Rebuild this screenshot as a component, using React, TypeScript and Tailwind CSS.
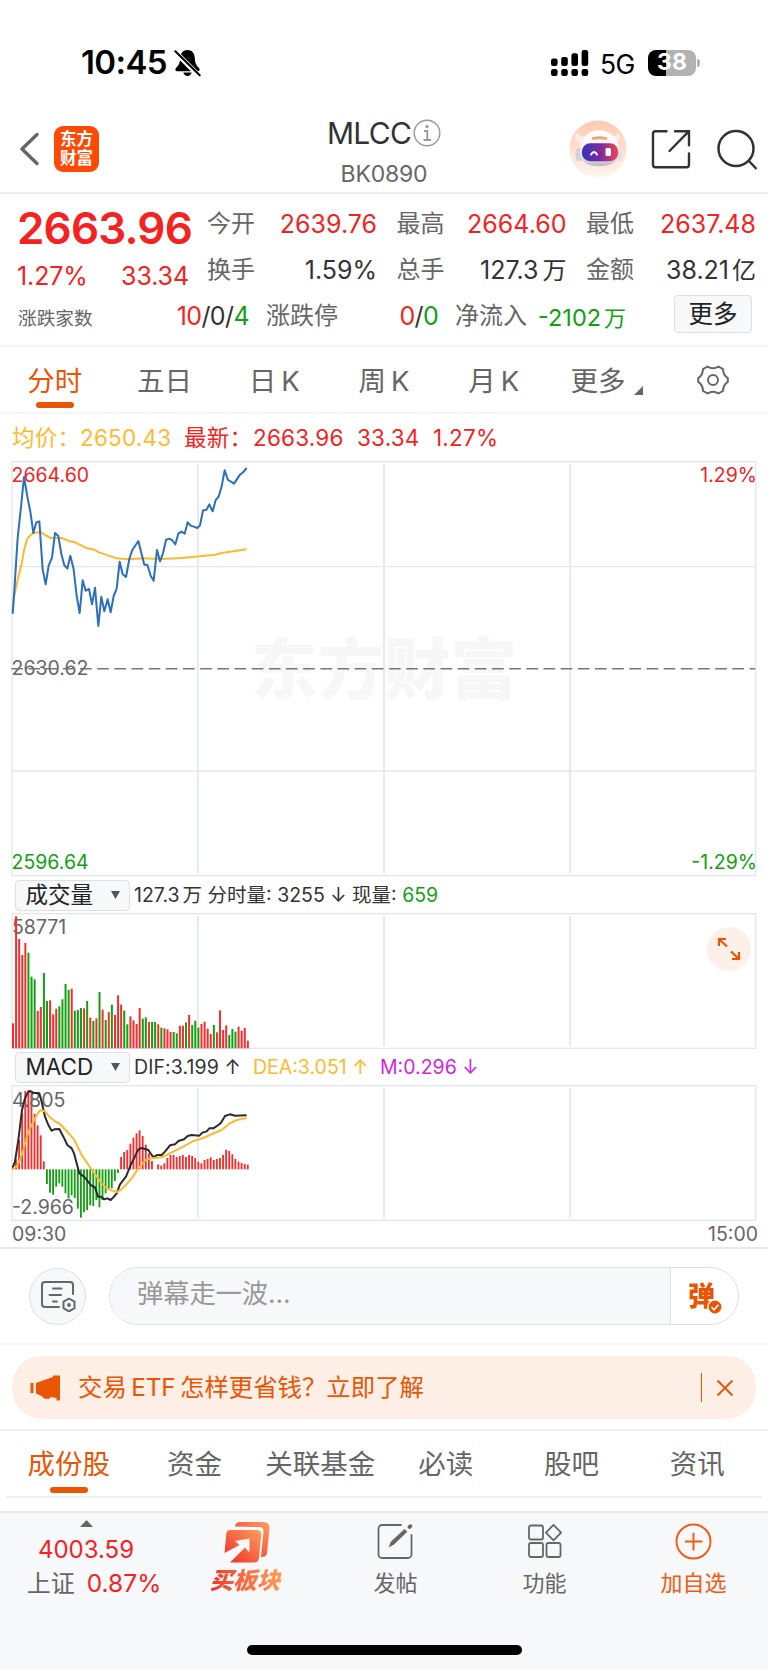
import type { ReactNode } from 'react';

type Bar = [string, number];

// 分时量: 每分钟一根 (颜色, 顶部 y)
const VOLUME: Bar[] = [
  ['r', 458], ['r', 137], ['r', 205], ['r', 253], ['r', 217], ['g', 246], ['g', 318], ['g', 326], ['r', 421], ['r', 409],
  ['g', 307], ['g', 391], ['r', 389], ['r', 431], ['r', 414], ['g', 407], ['g', 386], ['g', 340], ['g', 358], ['r', 354],
  ['g', 420], ['g', 418], ['g', 412], ['r', 413], ['g', 391], ['r', 441], ['g', 451], ['r', 443], ['g', 364], ['r', 417],
  ['g', 448], ['r', 424], ['g', 402], ['r', 433], ['r', 374], ['r', 402], ['g', 420], ['g', 461], ['r', 437], ['r', 449],
  ['r', 460], ['r', 412], ['g', 444], ['g', 440], ['r', 454], ['g', 454], ['g', 454], ['r', 461], ['g', 471], ['r', 473],
  ['r', 476], ['r', 484], ['g', 484], ['g', 488], ['r', 465], ['r', 465], ['g', 455], ['r', 433], ['g', 463], ['g', 450],
  ['g', 471], ['r', 460], ['r', 453], ['r', 474], ['r', 490], ['g', 463], ['r', 485], ['r', 419], ['r', 478], ['r', 464],
  ['g', 493], ['g', 475], ['g', 483], ['r', 468], ['r', 480], ['r', 472], ['r', 510],
];

const MACD = [
  350, 328, 270, 190, 123, 120, 128, 192, 226, 256, 334, 402, 428, 434, 410, 400, 410, 430, 445, 436,
  444, 476, 503, 487, 480, 466, 468, 450, 472, 450, 430, 420, 415, 393, 369, 321, 306, 300, 281, 263,
  250, 241, 258, 284, 310, 333, 358, 343, 347, 340, 324, 315, 315, 321, 318, 315, 321, 315, 318, 324,
  335, 340, 330, 327, 322, 330, 327, 324, 315, 299, 303, 313, 327, 335, 339, 342, 344,
];

const PRICE =
  '38,490 43,420 53,262 63,170 72,80 82,138 91,184 100,248 109,216 118,213 128,357 137,402 146,346 156,322 165,248 175,257 184,311 193,345 202,355 211,316 221,357 230,437 239,488 248,390 257,421 267,416 276,462 285,412 295,527 304,439 313,483 323,447 332,486 341,437 350,415 359,334 368,372 378,380 388,326 397,299 415,272 424,308 433,343 442,343 452,376 461,391 471,299 480,333 489,309 498,269 507,265 516,269 526,282 535,250 544,244 554,250 563,216 572,226 581,229 592,233 600,225 609,180 619,179 628,162 638,183 647,149 656,139 665,108 674,60 684,89 693,94 702,100 720,73 730,65 740,53';
const AVERAGE =
  '38,490 42,440 55,380 65,340 72,300 82,265 92,254 100,248 122,245 135,254 152,263 185,263 210,273 225,276 257,292 285,299 297,306 350,324 385,327 430,324 480,326 545,323 600,318 645,313 665,308 740,297';
const DIF =
  '38,352 45,335 55,270 66,180 75,145 82,130 90,123 100,128 118,130 125,155 135,200 145,225 155,242 163,238 178,237 190,260 202,285 215,295 222,310 230,340 238,370 252,380 262,392 272,405 285,412 294,440 303,440 312,448 322,445 332,450 342,440 350,430 360,403 378,380 392,345 402,325 415,298 425,294 445,300 455,315 461,322 471,315 485,315 495,305 510,286 525,283 535,273 552,268 563,258 575,255 598,257 607,248 620,244 628,235 640,235 655,225 663,218 675,198 690,193 705,197 740,196';
const DEA =
  '38,357 50,350 60,330 70,300 85,245 105,205 118,183 125,180 135,185 150,202 165,214 180,222 200,243 222,268 245,315 262,340 285,372 302,397 320,415 335,421 350,426 365,418 380,402 395,385 415,355 430,338 440,328 455,325 475,323 490,320 520,305 550,290 580,273 610,264 650,246 665,240 690,220 710,210 740,204';

const RED = '#f52d2d';
const GREEN = '#12a012';

function StatusBar() {
  return (
    <div className="flex h-[100px] items-start justify-between pr-[68px] pl-[81px]">
      <div className="flex h-[125px] items-center">
        <span className="text-[33px] leading-none font-semibold tracking-[-0.6px] text-black">10:45</span>
        <svg className="ml-[7px]" width="27" height="28" viewBox="0 0 27 28">
          <path d="M13.5 1C9 1 6.4 4.4 6.2 9c-.2 5-1.400 7.300-4.200 9.900-1.200 1.100-.7 3.300 1.200 3.300h20.600c1.900 0 2.400-2.200 1.200-3.300-2.800-2.600-4-4.900-4.200-9.900C20.600 4.400 18 1 13.500 1zM9.300 23.600c.7 2.200 2.200 3.400 4.200 3.400s3.500-1.200 4.200-3.400z" fill="#000" />
          <path d="M-1 .8 25.500 27.400" stroke="#fff" strokeWidth="5" />
          <path d="M1.300 2.200 25.700 26.200" stroke="#000" strokeWidth="2" strokeLinecap="round" />
        </svg>
      </div>
      <div className="flex h-[125px] items-center">
        <svg width="38" height="26" viewBox="0 0 38 26">
          {[8.5, 7, 3.3, 0].map((y, i) => (
            <g key={y}>
              <rect x={i * 10.2} y={y} width="6.6" height={16 - y} rx="2.200" />
              <rect x={i * 10.2} y="19" width="6.6" height="7" rx="2.200" />
            </g>
          ))}
        </svg>
        <span className="mt-[3px] ml-[11px] text-[26.500px] leading-none tracking-[-0.4px] text-black">5G</span>
        <div className="ml-[13px] flex h-[26px] w-[48px] items-center justify-center rounded-[8px] bg-[linear-gradient(90deg,#000_38%,#b2b2b2_38%)] text-[23px] leading-none font-bold text-white">
          38
        </div>
        <div className="ml-[1px] h-[8px] w-[3px] rounded-r-full bg-[#b2b2b2]" />
      </div>
    </div>
  );
}

function Robot() {
  return (
    <svg width="58" height="58" viewBox="0 0 58 58">
      <defs>
        <linearGradient id="halo" x1="0" y1="0" x2="0" y2="1">
          <stop offset="0" stopColor="#ffc9b0" />
          <stop offset="1" stopColor="#fff5f0" />
        </linearGradient>
        <linearGradient id="visor" x1="0" y1="0" x2="1" y2="0">
          <stop offset="0" stopColor="#3535b8" />
          <stop offset="0.5" stopColor="#7a2aa0" />
          <stop offset="1" stopColor="#ee4658" />
        </linearGradient>
        <linearGradient id="shell" x1="0" y1="0" x2="0" y2="1">
          <stop offset="0" stopColor="#ffffff" />
          <stop offset="0.700" stopColor="#ececf0" />
          <stop offset="1" stopColor="#bfb8bd" />
        </linearGradient>
      </defs>
      <circle cx="29" cy="29" r="28.500" fill="url(#halo)" />
      <path d="M7.500 12c-3 5-1 9.500 5 11.500l5-7c-5 .5-9-1-10-4.500zM49.500 12c3 5 1 9.500-5 11.500l-5-7c5 .5 9-1 10-4.500z" fill="#f7eeea" />
      <rect x="6.500" y="28" width="7" height="13" rx="3.500" fill="#d6d1d5" />
      <rect x="46" y="28" width="7" height="13" rx="3.500" fill="#e4dfe2" />
      <path d="M30 10.500c-11 0-18 7-19 20C10.500 41 17 46.300 30 46.300S51 41 50.500 30.500c-1-13-9.500-20-20.500-20z" fill="url(#shell)" />
      <path d="M24 18.500q6-1.500 13 0" stroke="#eda66e" strokeWidth="2.800" fill="none" strokeLinecap="round" />
      <rect x="12.800" y="23.300" width="36.500" height="18" rx="8.500" fill="url(#visor)" />
      <path d="M22 34.500q3.200-5 6 0" stroke="#fff" strokeWidth="2" fill="none" strokeLinecap="round" />
      <rect x="36.500" y="28" width="5.500" height="8" rx="1.500" fill="#fff" />
    </svg>
  );
}

function Header() {
  return (
    <div className="flex h-[94px] justify-between border-b-2 border-[#eeeeee]">
      <div className="flex h-[98px] w-[260px] items-center pl-[19px]">
        <svg width="20" height="34" viewBox="0 0 20 34" fill="none" stroke="#666" strokeWidth="3.400" strokeLinecap="round" strokeLinejoin="round">
          <path d="M18 2.500 3 17l15 14.500" />
        </svg>
        <div className="ml-[15px] flex h-[46px] w-[45px] flex-col items-center justify-center rounded-[9px] bg-[#ff4a06] text-[16.500px] leading-[19px] font-bold text-white">
          <span>东方</span>
          <span>财富</span>
        </div>
      </div>
      <div className="flex flex-col items-center pt-[18px]">
        <div className="flex h-[30px] items-center">
          <span className="text-[30px] leading-none tracking-[-0.7px] text-[#333]">MLCC</span>
          <svg className="ml-[2px]" width="28" height="28" viewBox="0 0 28 28" fill="none" stroke="#999" strokeWidth="1.400">
            <circle cx="14" cy="14" r="12.800" />
            <circle cx="14" cy="7.600" r="1.600" fill="#999" stroke="none" />
            <path d="M11 12h3.300v8.800M10.500 21h7.500" strokeWidth="1.800" />
          </svg>
        </div>
        <span className="mt-[15px] text-[23px] leading-none tracking-[-0.2px] text-[#666]">BK0890</span>
      </div>
      <div className="flex h-[98px] w-[260px] items-center justify-end pr-[10px]">
        <Robot />
        <svg className="ml-[24px]" width="40" height="40" viewBox="0 0 40 40" fill="none" stroke="#333" strokeWidth="2.400">
          <path d="M15.500 2.200H4.500a2.500 2.500 0 0 0-2.500 2.500v31a2.500 2.500 0 0 0 2.500 2.500h31a2.500 2.500 0 0 0 2.500-2.500V24.500M24 2.200h14v14M38 2.200 18.500 22" strokeLinecap="round" />
        </svg>
        <svg className="ml-[26px]" width="41" height="41" viewBox="0 0 41 41" fill="none" stroke="#333" strokeWidth="2.500">
          <circle cx="19" cy="19.500" r="17.500" />
          <path d="m31 31 8.500 9" />
        </svg>
      </div>
    </div>
  );
}

interface QuoteCellProps {
  label: string;
  children: ReactNode;
  up?: boolean;
}

function QuoteCell({ label, children, up }: QuoteCellProps) {
  return (
    <div className="flex h-[46px] w-[170px] items-center justify-between">
      <span className="text-[24px] text-[#666]">{label}</span>
      <span className={`text-[25px] ${up ? 'text-[#f52222]' : 'text-[#333]'}`}>{children}</span>
    </div>
  );
}

function Quote() {
  return (
    <div className="h-[153px] border-b-2 border-[#f5f5f5] pt-[7px] leading-none whitespace-nowrap">
      <div className="flex h-[92px]">
        <div className="w-[207px] pl-[17px] text-[#f52222]">
          <div className="flex h-[54px] items-center text-[44px] font-semibold tracking-[-0.8px]">2663.96</div>
          <div className="flex h-[42px] w-[172px] items-center justify-between text-[25px] tracking-[-0.1px]">
            <span>1.27%</span>
            <span>33.34</span>
          </div>
        </div>
        <div className="grid w-[549px] grid-cols-[170px_170px_170px] justify-between">
          <QuoteCell label="今开" up>2639.76</QuoteCell>
          <QuoteCell label="最高" up>2664.60</QuoteCell>
          <QuoteCell label="最低" up>2637.48</QuoteCell>
          <QuoteCell label="换手">1.59%</QuoteCell>
          <QuoteCell label="总手">127.3<span className="ml-[4px] text-[24px]">万</span></QuoteCell>
          <QuoteCell label="金额">38.21<span className="ml-[3px] text-[24px]">亿</span></QuoteCell>
        </div>
      </div>
      <div className="flex h-[46px] items-center pl-[18px] text-[24px] text-[#333]">
        <span className="mt-[6px] w-[90px] text-[18.700px] text-[#666]">涨跌家数</span>
        <span className="w-[141px] text-right text-[25px] tracking-[-0.600px]">
          <span className="text-[#f52222]">10</span>/0/<span className="text-[#12a012]">4</span>
        </span>
        <span className="ml-[17px] w-[90px] text-[#666]">涨跌停</span>
        <span className="w-[82px] text-right text-[25px] tracking-[-0.700px]">
          <span className="text-[#f52222]">0</span>/<span className="text-[#12a012]">0</span>
        </span>
        <span className="ml-[17px] w-[83px] text-[#666]">净流入</span>
        <span className="mt-[3px] w-[136px] text-[23.500px] text-[#12a012]">-2102<span className="ml-[3px] text-[22px]">万</span></span>
        <span className="-mt-[4px] flex h-[38px] w-[78px] items-center justify-center rounded-[4px] border-[1.500px] border-[#dddfe6] bg-[#f7f8fa] text-[24.500px] text-[#222]">
          更多
        </span>
      </div>
    </div>
  );
}

function PeriodTabs() {
  return (
    <div className="grid h-[67px] grid-cols-7 justify-items-center border-b-2 border-[#f5f5f5] text-[27.500px] leading-[68px] whitespace-nowrap text-[#666]">
      <div className="flex flex-col items-center text-[#ea5504]">
        <span className="h-[55px]">分时</span>
        <span className="h-[6px] w-[38px] rounded-full bg-[#ea5504]" />
      </div>
      <span>五日</span>
      <span>日<span className="ml-[5px]">K</span></span>
      <span>周<span className="ml-[5px]">K</span></span>
      <span>月<span className="ml-[5px]">K</span></span>
      <div className="flex pl-[7px]">
        <span>更多</span>
        <svg className="mt-[39px] ml-[9px]" width="9" height="9" viewBox="0 0 9 9">
          <path d="M9 0v9H0z" fill="#666" />
        </svg>
      </div>
      <svg className="mt-[17px]" width="32" height="32" viewBox="0 0 32 32" fill="none" stroke="#666" strokeWidth="2">
        <circle cx="16" cy="16" r="5" />
        <path d="M10.500 2.500q5.500 3.500 11 0l4.500 2.600q.2 6 4.800 9v3.800q-4.600 3-4.800 9l-4.500 2.600q-5.500-3.500-11 0L6 26.900q-.2-6-4.800-9v-3.800q4.600-3 4.800-9z" strokeLinejoin="round" />
      </svg>
    </div>
  );
}

// 面板网格: 外框 + 三条竖线
function Frame({ height }: { height: number }) {
  return (
    <g stroke="#e3e6ec" fill="none">
      <rect x="2" y="2" width="2231" height={height - 4} strokeWidth="4" />
      {[560, 1118, 1676].map((x) => (
        <path key={x} d={`M${x} 9V${height - 8}`} strokeWidth="5" />
      ))}
    </g>
  );
}

function PriceChart() {
  return (
    <div className="relative mx-[11px] h-[416px] text-[19.500px] leading-none">
      <div className="absolute top-[176px] left-[240px] text-[66.500px] font-black text-[#f7f7f7]">东方财富</div>
      <svg className="absolute inset-0" width="746" height="416" viewBox="-1 0 2238 1248">
        <Frame height={1246} />
        <path d="M0 317H2232M0 930H2232" stroke="#e3e6ec" strokeWidth="4" />
      </svg>
      <span className="absolute top-[5px] left-[0.500px] text-[#f52222]">2664.60</span>
      <span className="absolute top-[5px] right-0 text-[#f52222]">1.29%</span>
      <span className="absolute top-[198px] left-[0.500px] text-[#666]">2630.62</span>
      <span className="absolute bottom-[5px] left-[0.500px] text-[#12a012]">2596.64</span>
      <span className="absolute right-0 bottom-[5px] text-[#12a012]">-1.29%</span>
      <svg className="absolute inset-0" width="746" height="416" viewBox="33 32 2238 1248" fill="none" strokeLinejoin="round">
        <path d="M34 655H2266" stroke="#777" strokeWidth="4.500" strokeDasharray="35 16.500" />
        <polyline points={AVERAGE} stroke="#ffb92e" strokeWidth="6" />
        <polyline points={PRICE} stroke="#2b6fbd" strokeWidth="6" />
      </svg>
    </div>
  );
}

function IndicatorBar({ name, children }: { name: string; children: ReactNode }) {
  return (
    <div className="flex h-[36px] items-center pl-[15px] text-[19.500px] leading-none whitespace-nowrap text-[#333]">
      <div className="mr-[4px] flex h-[31px] w-[115px] items-center justify-between rounded-[4px] border-[1.500px] border-[#dddfe6] bg-[#f7f8fa] pr-[9px] pl-[9.500px] text-[22.500px] text-[#222]">
        {name}
        <svg width="9" height="8" viewBox="0 0 9 8">
          <path d="M0 0h9L4.500 8z" fill="#555" />
        </svg>
      </div>
      <div className="flex pt-[2px]">{children}</div>
    </div>
  );
}

function VolumeChart() {
  return (
    <div className="relative mx-[11px] h-[136px] leading-none">
      <svg width="746" height="136" viewBox="-1 0 2238 408">
        <Frame height={408} />
      </svg>
      <span className="absolute top-[5px] left-[1px] text-[19.500px] text-[#666]">58771</span>
      <svg className="absolute inset-0" width="746" height="136" viewBox="33 127 2238 408">
        {VOLUME.map(([color, top], i) => (
          <rect key={i} x={36 + i * 9.27} y={top} width="6" height={533 - top} fill={color === 'r' ? RED : GREEN} />
        ))}
      </svg>
      <div className="absolute top-[14px] right-[6px] flex h-[44px] w-[44px] items-center justify-center rounded-full bg-[#fdf0e9]">
        <svg width="24" height="24" viewBox="0 0 24 24" fill="none" stroke="#ea5504" strokeWidth="2.200">
          <path d="M2 9V2h7M2.500 2.500l7.500 7M22 15v7h-7M21.500 21.500l-7.500-7" />
        </svg>
      </div>
    </div>
  );
}

function MacdChart() {
  return (
    <div className="relative mx-[11px] h-[136px] leading-none">
      <svg width="746" height="136" viewBox="-1 0 2238 408">
        <Frame height={408} />
      </svg>
      <svg className="absolute inset-0" width="746" height="136" viewBox="33 105 2238 408">
        {MACD.map((y, i) => (
          <rect key={i} x={36 + i * 9.27} y={Math.min(y, 358)} width="5.500" height={Math.abs(y - 358)} fill={y < 358 ? RED : GREEN} />
        ))}
      </svg>
      <span className="absolute top-[6px] left-[1px] text-[19.500px] text-[#666]">4.805</span>
      <span className="absolute bottom-[4px] left-[1px] text-[19.500px] text-[#666]">-2.966</span>
      <svg className="absolute inset-0" width="746" height="136" viewBox="33 105 2238 408" fill="none" strokeLinejoin="round">
        <polyline points={DIF} stroke="#2a2a2a" strokeWidth="6" />
        <polyline points={DEA} stroke="#ffb92e" strokeWidth="6" />
      </svg>
    </div>
  );
}

function CommentBar() {
  return (
    <div className="flex h-[96px] items-center border-b-2 border-[#f5f5f5] pl-[29px] leading-none">
      <div className="flex h-[57px] w-[57px] items-center justify-center rounded-full border-[1.500px] border-[#dddfe6] bg-[#f7f8fa]">
        <svg width="36" height="32" viewBox="0 0 36 32" fill="none" stroke="#666" strokeWidth="2" strokeLinecap="round">
          <path d="M33 14V5a3 3 0 0 0-3-3H5a3 3 0 0 0-3 3v19a3 3 0 0 0 3 3h14M13 8.500h8.500M9.500 15H21M13 21.500h4" />
          <path d="m29 18.500 5.500 3.200v6.500L29 31.400l-5.500-3.200v-6.500z" strokeLinejoin="round" />
          <circle cx="29" cy="25" r="1.900" fill="#666" stroke="none" />
        </svg>
      </div>
      <div className="ml-[23px] flex h-[58px] w-[630px] overflow-hidden rounded-full border-[1.500px] border-[#dddfe6]">
        <div className="flex flex-1 items-center border-r-[1.500px] border-[#dddfe6] bg-[#f7f8fa] pb-[4px] pl-[27px] text-[26.300px] tracking-[-0.100px] text-[#999]">
          弹幕走一波...
        </div>
        <div className="relative flex w-[67px] items-center pt-[1px] pl-[17px] text-[27px] font-black text-[#ea5504]">
          弹
          <svg className="absolute top-[31px] left-[36px]" width="16" height="16" viewBox="0 0 16 16">
            <circle cx="8" cy="8" r="7.200" fill="#ea5504" stroke="#fff" strokeWidth="1.500" />
            <path d="m4.500 8 2.500 2.700 4.500-5" stroke="#fff" strokeWidth="1.600" fill="none" />
          </svg>
        </div>
      </div>
    </div>
  );
}

function Banner() {
  return (
    <div className="h-[86px] border-b-2 border-[#f0f0f2] px-[12px] pt-[11px]">
      <div className="flex h-[63px] items-center rounded-[30px] bg-[#fdeee6] pr-[22px] pl-[18px] text-[24.400px] leading-none text-[#ea5504]">
        <svg width="30" height="26" viewBox="0 0 30 26" fill="#ea5504">
          <path d="M.5 8h3v10h-3zM6 8l17-6V.5h7v25h-3.500V23l-6-1-1.500 2-5-.500-1.500-2L6 18.500z" />
        </svg>
        <span className="ml-[18px] flex-1">交易<span className="mx-[4.500px] tracking-[-0.200px]">ETF</span>怎样更省钱？立即了解</span>
        <span className="mr-[14px] h-[29px] w-[1.500px] bg-[#ea5504]" />
        <svg width="18" height="18" viewBox="0 0 18 18" stroke="#ea5504" strokeWidth="1.800">
          <path d="m1.500 1.500 15 15M16.500 1.500l-15 15" />
        </svg>
      </div>
    </div>
  );
}

function SectionTabs() {
  return (
    <div className="mx-[6px] grid h-[67px] grid-cols-6 justify-items-center border-b-2 border-[#f0f1f4] pr-[2px] text-[27.500px] leading-[67px] whitespace-nowrap text-[#666]">
      <div className="flex flex-col items-center text-[#ea5504]">
        <span className="h-[56px]">成份股</span>
        <span className="h-[6px] w-[38px] rounded-full bg-[#ea5504]" />
      </div>
      <span>资金</span>
      <span>关联基金</span>
      <span>必读</span>
      <span>股吧</span>
      <span>资讯</span>
    </div>
  );
}

function NavItem({ label, children }: { label: string; children: ReactNode }) {
  return (
    <div className="flex flex-col items-center text-[22px]">
      <div className="flex h-[56px] items-center">{children}</div>
      <span className="mt-[3px]">{label}</span>
    </div>
  );
}

function BottomNav() {
  return (
    <div className="h-[160px] border-t-2 border-[#e6e8ec] bg-[#f7f8fa] leading-none whitespace-nowrap text-[#666]">
      <div className="grid h-[132px] grid-cols-[172px_149px_149px_149px_149px]">
        <div className="flex flex-col items-center pt-[7px] text-[24px]">
          <svg width="13" height="7" viewBox="0 0 13 7">
            <path d="M0 7 6.500 0 13 7z" fill="#666" />
          </svg>
          <span className="mt-[11px] text-[#f52222]">4003.59</span>
          <span className="mt-[9px] pl-[16px]">
            上证<span className="ml-[12px] text-[24.500px] text-[#f52222]">0.87%</span>
          </span>
        </div>
        <div className="flex flex-col items-center pt-[8px]">
          <svg width="46" height="42" viewBox="0 0 46 42">
            <defs>
              <linearGradient id="buy" x1="0" y1="1" x2="1" y2="0">
                <stop offset="0.100" stopColor="#f0352c" />
                <stop offset="1" stopColor="#ffa05e" />
              </linearGradient>
            </defs>
            <path d="M11 5.500C11.500 2.500 13 1 16 1h23c4.500 0 7 3 6.500 7L43 32c-.3 2.500-2 4-6 4l2.500-25c.3-3-1-5-4-5z" fill="url(#buy)" />
            <path d="M6 9h27c3 0 4.500 1.500 4.200 4.500L35 37c-.3 3-2 4.500-5 4.500H6l15-15 4.500 5V17.500L11 20l4.500 4L.5 32 2.300 13C2.500 10.500 4 9 6 9z" fill="url(#buy)" />
          </svg>
          <span className="mt-[6px] bg-gradient-to-r from-[#f0302b] to-[#ff9d55] bg-clip-text pr-[3px] text-[23.500px] font-black text-transparent italic">买板块</span>
        </div>
        <NavItem label="发帖">
          <svg width="37" height="37" viewBox="0 0 37 37" fill="none" stroke="#666" strokeWidth="1.800" strokeLinecap="round">
            <path d="M24 2H5a3.500 3.500 0 0 0-3.500 3.500v26A3.500 3.500 0 0 0 5 35h26a3.500 3.500 0 0 0 3.500-3.500V12" />
            <path d="m11.500 24.500 2.500-6L27.500 6l2.800 2.800L17 21.500z" fill="#666" stroke="none" />
            <path d="M32.500 4l.8-.8" strokeWidth="3.800" />
          </svg>
        </NavItem>
        <NavItem label="功能">
          <svg width="34" height="34" viewBox="0 0 34 34" fill="none" stroke="#666" strokeWidth="1.800" strokeLinejoin="round">
            <rect x="1" y="1.500" width="14" height="14" rx="2" />
            <rect x="1" y="19" width="14" height="14" rx="2" />
            <rect x="18.500" y="19" width="14" height="14" rx="2" />
            <path d="m25.500.9 7.600 7.700-7.600 7.700-7.600-7.700z" />
          </svg>
        </NavItem>
        <div className="text-[#f25a10]">
          <NavItem label="加自选">
            <svg width="37" height="37" viewBox="0 0 37 37" fill="none" stroke="#f25a10" strokeWidth="1.900">
              <circle cx="18.500" cy="18.500" r="17" />
              <path d="M18.500 10v17.500M10 18.500h17.500" />
            </svg>
          </NavItem>
        </div>
      </div>
      <div className="mx-auto h-[10px] w-[275px] rounded-full bg-black" />
    </div>
  );
}

export default function App() {
  return (
    <div className="h-[1670px] w-[768px] overflow-hidden bg-white font-['Inter','Noto_Sans_CJK_SC',sans-serif]">
      <StatusBar />
      <Header />
      <Quote />
      <PeriodTabs />
      <div className="flex h-[47px] items-center pt-[2px] pl-[12px] text-[22.500px] leading-none tracking-[0.200px] whitespace-nowrap">
        <span className="w-[68px] text-[#ffb92e]">均价：</span>
        <span className="w-[104px] text-[#ffb92e]">2650.43</span>
        <span className="w-[69px] text-[#f52222]">最新：</span>
        <span className="w-[104px] text-[#f52222]">2663.96</span>
        <span className="w-[76px] text-[#f52222]">33.34</span>
        <span className="text-[#f52222]">1.27%</span>
      </div>
      <PriceChart />
      <IndicatorBar name="成交量">
        <span>
          127.3<span className="ml-[3px]">万</span> 分时量: 3255 ↓ 现量: <span className="text-[#12a012]">659</span>
        </span>
      </IndicatorBar>
      <VolumeChart />
      <IndicatorBar name="MACD">
        <span className="w-[119px] tracking-[0.100px]">DIF:3.199 ↑</span>
        <span className="w-[127px] text-[#ffb92e]">DEA:3.051 ↑</span>
        <span className="text-[#d51fe0]">M:0.296 ↓</span>
      </IndicatorBar>
      <MacdChart />
      <div className="flex h-[28px] items-center justify-between border-b-2 border-[#e8e9ec] pt-[2px] pr-[10px] pl-[12px] text-[19.500px] leading-none text-[#666]">
        <span>09:30</span>
        <span>15:00</span>
      </div>
      <CommentBar />
      <Banner />
      <SectionTabs />
      <div className="h-[13px]" />
      <BottomNav />
    </div>
  );
}
